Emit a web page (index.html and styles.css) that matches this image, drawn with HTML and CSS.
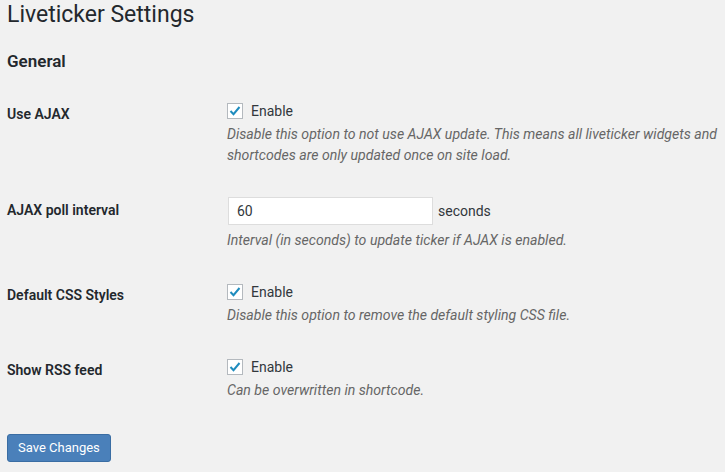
FILE: index.html
```html
<!DOCTYPE html>
<html lang="en">
<head>
    <meta charset="UTF-8">
    <meta name="viewport" content="width=device-width, initial-scale=1.0">
    <title>Liveticker Settings</title>
    <link rel="stylesheet" href="styles.css">
</head>
<body>
    <div class="wrap">
        <h1>Liveticker Settings</h1>
        <h2>General</h2>
        <table class="form-table">
            <tr>
                <th>Use AJAX</th>
                <td>
                    <label class="check-label">
                        <span class="checkbox" role="checkbox" aria-checked="true">
                            <svg width="14" height="14" viewBox="0 0 14 14"><polyline points="2.5,7 5.5,10.2 11.5,3" fill="none" stroke="#1e8cbe" stroke-width="2"/></svg>
                        </span>
                        Enable
                    </label>
                    <p class="description">Disable this option to not use AJAX update. This means all liveticker widgets and shortcodes are only updated once on site load.</p>
                </td>
            </tr>
            <tr>
                <th>AJAX poll interval</th>
                <td>
                    <div class="input-row">
                        <input type="text" class="small-text" value="60">
                        <span>seconds</span>
                    </div>
                    <p class="description desc-input">Interval (in seconds) to update ticker if AJAX is enabled.</p>
                </td>
            </tr>
            <tr>
                <th>Default CSS Styles</th>
                <td>
                    <label class="check-label">
                        <span class="checkbox" role="checkbox" aria-checked="true">
                            <svg width="14" height="14" viewBox="0 0 14 14"><polyline points="2.5,7 5.5,10.2 11.5,3" fill="none" stroke="#1e8cbe" stroke-width="2"/></svg>
                        </span>
                        Enable
                    </label>
                    <p class="description">Disable this option to remove the default styling CSS file.</p>
                </td>
            </tr>
            <tr>
                <th>Show RSS feed</th>
                <td>
                    <label class="check-label">
                        <span class="checkbox" role="checkbox" aria-checked="true">
                            <svg width="14" height="14" viewBox="0 0 14 14"><polyline points="2.5,7 5.5,10.2 11.5,3" fill="none" stroke="#1e8cbe" stroke-width="2"/></svg>
                        </span>
                        Enable
                    </label>
                    <p class="description">Can be overwritten in shortcode.</p>
                </td>
            </tr>
        </table>
        <p class="submit">
            <button class="button-primary">Save Changes</button>
        </p>
    </div>
</body>
</html>
```

FILE: styles.css
```css
body {
    font-family: Roboto, 'Liberation Sans', sans-serif;
    font-size: 13px;
    background: #f1f1f1;
    color: #32373c;
    margin: 0;
    padding: 0;
}
.wrap {
    padding-left: 7px;
}
h1 {
    font-size: 23px;
    font-weight: 400;
    line-height: 1.3;
    color: #23282d;
    margin: 0;
}
h2 {
    font-size: 17px;
    font-weight: 600;
    line-height: 1.3;
    color: #23282d;
    margin: 20px 0 13px;
}
.form-table {
    border-collapse: collapse;
    width: 100%;
}
.form-table th {
    width: 200px;
    padding: 20px 10px 20px 0;
    text-align: left;
    vertical-align: top;
    font-size: 14px;
    font-weight: 600;
    line-height: 1.3;
    color: #23282d;
}
.form-table td {
    padding: 15px 0 15px 10px;
    vertical-align: top;
    font-size: 14px;
    line-height: 22px;
}
.check-label {
    display: flex;
    align-items: center;
    height: 22px;
    color: #32373c;
}
.checkbox {
    display: inline-flex;
    align-items: center;
    justify-content: center;
    width: 14px;
    height: 14px;
    border: 1px solid #b4b9be;
    background: #ffffff;
    margin-right: 8px;
}
.input-row {
    display: flex;
    align-items: center;
    gap: 5px;
    padding-top: 1px;
}
.small-text {
    width: 205px;
    height: 28px;
    margin: 0 0 0 1px;
    padding: 0 8px;
    box-sizing: border-box;
    border: 1px solid #dddddd;
    background: #ffffff;
    font-family: inherit;
    font-size: 14px;
    color: #32373c;
}
.description {
    margin: 2px 0 0;
    font-style: italic;
    font-size: 14.1px;
    color: #666666;
    line-height: 21px;
}
.desc-input {
    margin-top: 5px;
}
.submit {
    margin: 18px 0 0;
}
.button-primary {
    font-family: inherit;
    font-size: 13px;
    color: #ffffff;
    background: #4a80ba;
    border: 1px solid #3a6da3;
    border-radius: 3px;
    height: 28px;
    padding: 0 10px;
    cursor: pointer;
}
```
